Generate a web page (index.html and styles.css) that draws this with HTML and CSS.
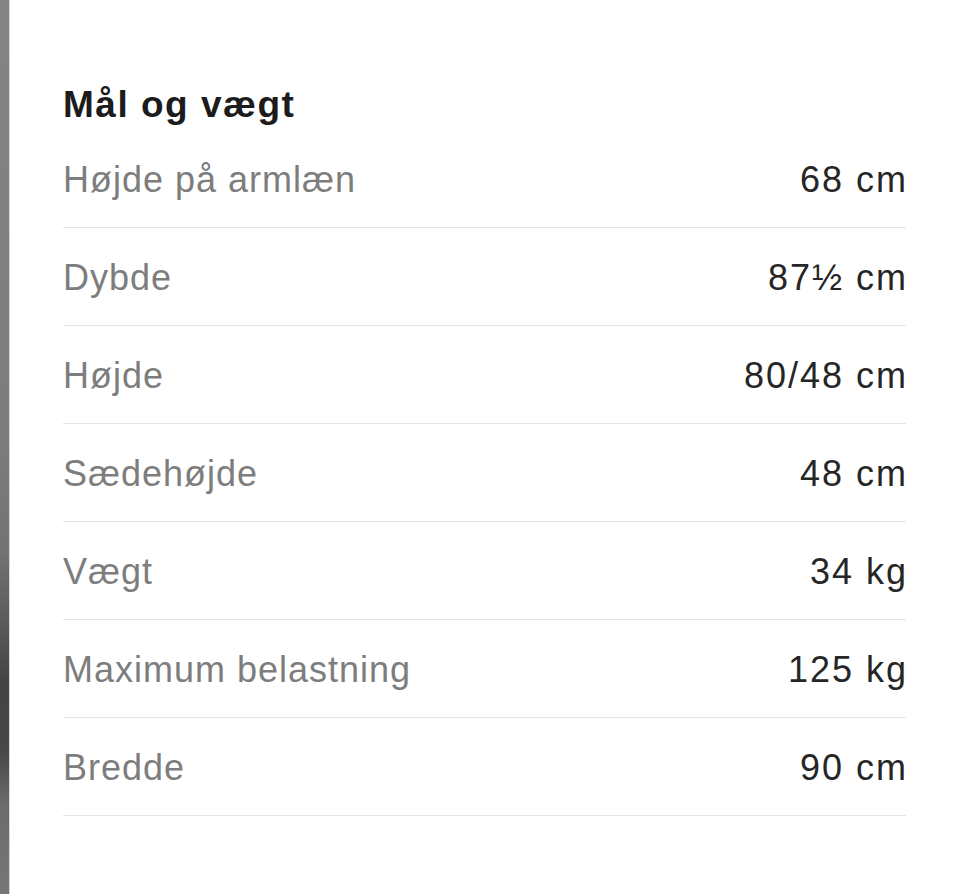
FILE: index.html
```html
<!DOCTYPE html>
<html lang="da">
<head>
    <meta charset="UTF-8">
    <meta name="viewport" content="width=device-width, initial-scale=1.0">
    <title>Mål og vægt</title>
    <link rel="stylesheet" href="styles.css">
</head>
<body>
    <div class="page">
        <div class="edge"></div>

        <div class="sheet">
            <h2>Mål og vægt</h2>
            <div class="specs">
                <div class="row"><span class="label">Højde på armlæn</span><span class="value">68 cm</span></div>
                <div class="row"><span class="label">Dybde</span><span class="value">87½ cm</span></div>
                <div class="row"><span class="label">Højde</span><span class="value">80/48 cm</span></div>
                <div class="row"><span class="label">Sædehøjde</span><span class="value">48 cm</span></div>
                <div class="row"><span class="label">Vægt</span><span class="value">34 kg</span></div>
                <div class="row"><span class="label">Maximum belastning</span><span class="value">125 kg</span></div>
                <div class="row"><span class="label">Bredde</span><span class="value">90 cm</span></div>
            </div>
        </div>
    </div>
</body>
</html>
```

FILE: styles.css
```css
body {
    margin: 0;
    background-color: #ffffff;
    font-family: "Helvetica Neue", Helvetica, "Liberation Sans", Arial, sans-serif;
}
.page {
    display: flex;
    min-height: 894px;
}
.edge {
    width: 9px;
    flex-shrink: 0;
    border-right: 1px solid #d6d6d6;
    background: linear-gradient(to bottom,
        #848484 0%,
        #7c7c7c 50%,
        #727272 62%,
        #5a5a5a 70%,
        #444444 76%,
        #474747 84%,
        #6c6c6c 90%,
        #767676 100%);
}
.sheet {
    flex: 1;
    padding: 83px 54px 0 53px;
}
h2 {
    margin: 0 0 3px 0;
    font-size: 37px;
    line-height: 44px;
    font-weight: bold;
    letter-spacing: 1.5px;
    color: #1c1c1c;
}
.row {
    display: flex;
    justify-content: space-between;
    align-items: baseline;
    padding: 30px 0 27px 0;
    border-bottom: 1px solid #e4e4e4;
    font-size: 36px;
    line-height: 40px;
    letter-spacing: 1px;
}
.label {
    color: #7d7d7d;
}
.value {
    color: #262626;
    letter-spacing: 2px;
    margin-right: -2px;
}
```
